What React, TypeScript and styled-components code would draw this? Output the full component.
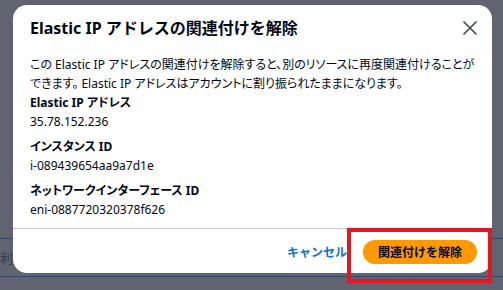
import React from "react";
import styled, { createGlobalStyle } from "styled-components";

const GlobalStyle = createGlobalStyle`
    html, body {
        margin: 0;
        padding: 0;
        width: 503px;
        height: 290px;
        overflow: hidden;
        background: #5f6470;
    }
    body {
        font-family: "Noto Sans", "Noto Sans CJK JP", sans-serif;
        font-feature-settings: "palt";
        color: #000716;
    }
`;

interface IDetail {
    label: string,
    value: string
}

const details: IDetail[] = [
    { label: 'Elastic IP アドレス', value: '35.78.152.236' },
    { label: 'インスタンス ID', value: 'i-089439654aa9a7d1e' },
    { label: 'ネットワークインターフェース ID', value: 'eni-0887720320378f626' },
]

const App: React.FC = () => {
    return (
        <>
            <GlobalStyle />
            <Page>
                <PageRow $height={239}></PageRow>
                <PageRow $height={38}>
                    <PageText>利状</PageText>
                </PageRow>
            </Page>
            <Modal>
                <Header>
                    <Title>Elastic IP アドレスの関連付けを解除</Title>
                    <CloseButton aria-label="閉じる">
                        <svg width="14" height="14" viewBox="0 0 14 14">
                            <path d="M1 1 L13 13 M13 1 L1 13" stroke="#414d5c" strokeWidth="1.7" strokeLinecap="round" fill="none" />
                        </svg>
                    </CloseButton>
                </Header>
                <Body>
                    <Description>
                        この Elastic IP アドレスの関連付けを解除すると、別のリソースに再度関連付けることができます。 Elastic IP アドレスはアカウントに割り振られたままになります。
                    </Description>
                    <DetailList>
                        {details.map((d) => (
                            <Detail key={d.label}>
                                <DetailLabel>{d.label}</DetailLabel>
                                <DetailValue>{d.value}</DetailValue>
                            </Detail>
                        ))}
                    </DetailList>
                </Body>
                <Footer>
                    <LinkButton>キャンセル</LinkButton>
                    <PrimaryButton>関連付けを解除</PrimaryButton>
                </Footer>
            </Modal>
            <Highlight />
        </>
    )
}

const Page = styled.div`
    display: flex;
    flex-direction: column;
    width: 503px;
`;

const PageRow = styled.div<{ $height: number }>`
    height: ${(p) => p.$height}px;
    border-bottom: 1px solid #34466b;
    box-sizing: border-box;
    display: flex;
    align-items: center;
`;

const PageText = styled.span`
    margin-left: 0;
    font-size: 13px;
    color: #383c46;
`;

const Modal = styled.div`
    position: absolute;
    left: 13px;
    top: 5px;
    width: 479px;
    height: 268px;
    background: #ffffff;
    border-radius: 14px;
    display: flex;
    flex-direction: column;
    overflow: hidden;
`;

const Header = styled.div`
    display: flex;
    align-items: center;
    justify-content: space-between;
    padding: 12px 14px 0 17px;
    height: 22px;
`;

const Title = styled.h2`
    margin: 0;
    font-size: 16px;
    line-height: 22px;
    font-weight: 700;
    font-feature-settings: normal;
    color: #000716;
`;

const CloseButton = styled.button`
    width: 16px;
    height: 16px;
    padding: 0;
    border: none;
    background: transparent;
    display: flex;
    align-items: center;
    justify-content: center;
`;

const Body = styled.div`
    flex: 1;
    padding: 16px 17px 0 17px;
`;

const Description = styled.p`
    margin: 0;
    font-size: 12px;
    line-height: 19px;
    color: #000716;
`;

const DetailList = styled.div`
    display: flex;
    flex-direction: column;
    gap: 6px;
`;

const Detail = styled.div`
    display: flex;
    flex-direction: column;
`;

const DetailLabel = styled.div`
    font-size: 12px;
    line-height: 19px;
    font-weight: 700;
`;

const DetailValue = styled.div`
    font-size: 12px;
    line-height: 19px;
`;

const Footer = styled.div`
    display: flex;
    align-items: center;
    justify-content: flex-end;
    gap: 16px;
    height: 42px;
    padding: 2px 15px 0 0;
    border-top: 1px solid #c6c6cd;
`;

const LinkButton = styled.button`
    border: none;
    background: transparent;
    padding: 0;
    font-family: inherit;
    font-size: 12px;
    font-weight: 700;
    color: #0972d3;
`;

const PrimaryButton = styled.button`
    width: 114px;
    height: 24px;
    border: none;
    border-radius: 12px;
    background: #ff9900;
    font-family: inherit;
    font-size: 12px;
    font-weight: 700;
    color: #000716;
    padding: 0;
`;

const Highlight = styled.div`
    position: absolute;
    left: 347px;
    top: 228px;
    width: 145px;
    height: 55px;
    box-sizing: border-box;
    border: 4px solid #e5161c;
`;

export default App
